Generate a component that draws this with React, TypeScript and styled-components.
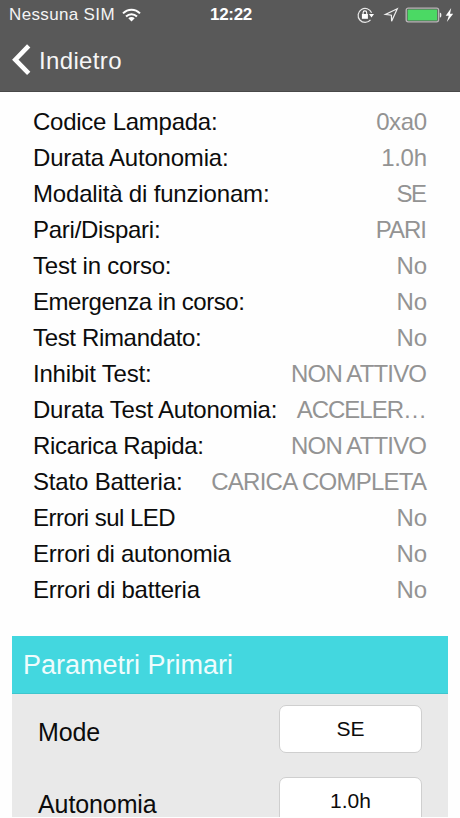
import React from "react";
import styled, { createGlobalStyle } from "styled-components";

const GlobalStyle = createGlobalStyle`
  *, *::before, *::after { box-sizing: border-box; }
  html, body { margin: 0; padding: 0; background: #fff; }
  body { font-family: "Liberation Sans", Arial, sans-serif; overflow: hidden; }
`;

const Screen = styled.div`
  display: flex;
  flex-direction: column;
  width: 460px;
  height: 818px;
  padding-bottom: 1px;
  overflow: hidden;
  background: #fefefe;
`;

const Header = styled.header`
  flex: none;
  height: 92px;
  background: #595959;
  border-bottom: 1px solid #484848;
  color: #fff;
`;

const StatusBar = styled.div`
  display: grid;
  grid-template-columns: 1fr auto 1fr;
  align-items: center;
  height: 29px;
  padding: 0 7px 0 9px;
`;

const Carrier = styled.div`
  display: flex;
  align-items: center;
  gap: 7px;
  font-size: 17px;
  line-height: 29px;
  letter-spacing: 0.35px;
  color: #f4f4f4;
`;

const Clock = styled.time`
  font-size: 17px;
  line-height: 29px;
  font-weight: 700;
  letter-spacing: -0.3px;
`;

const StatusIcons = styled.div`
  display: flex;
  justify-content: flex-end;
`;

const BackButton = styled.button`
  display: flex;
  align-items: center;
  gap: 8px;
  height: 62px;
  margin: 0;
  padding: 0 0 0 11px;
  border: 0;
  background: none;
  color: #fff;
  font: 24px/62px "Liberation Sans", Arial, sans-serif;
`;

const BackLabel = styled.span`
  padding-top: 1px;
  color: #f6f6f6;
  letter-spacing: 0.35px;
`;

const Details = styled.dl`
  flex: none;
  margin: 0;
  padding: 12px 33px 0;
  height: 544px;
`;

const DetailRow = styled.div`
  display: flex;
  justify-content: space-between;
  height: 36px;
  font-size: 24px;
  line-height: 36px;
  white-space: nowrap;
`;

const Term = styled.dt<{ $tracking: number }>`
  color: #0c0c0c;
  letter-spacing: ${(p) => p.$tracking}px;
`;

const Value = styled.dd<{ $tracking: number }>`
  margin: 0 ${(p) => -p.$tracking}px 0 0;
  color: #939393;
  letter-spacing: ${(p) => p.$tracking}px;
`;

const Panel = styled.section`
  flex: 1;
  min-height: 0;
  width: 436px;
  margin-left: 12px;
  overflow: hidden;
  background: #e9e9e9;
`;

const PanelTitle = styled.h2`
  height: 58px;
  margin: 0;
  padding-left: 11px;
  border-bottom: 1px solid #3ec6cd;
  background: #43d7df;
  color: #effcfd;
  font-size: 27px;
  line-height: 58px;
  font-weight: 400;
`;

const Field = styled.div`
  display: flex;
  align-items: flex-start;
  justify-content: space-between;
  height: 72px;
  padding: 11px 26px 0 26px;
`;

const FieldLabel = styled.label`
  color: #0c0c0c;
  font-size: 25px;
  line-height: 54px;
  letter-spacing: -0.1px;
`;

const Picker = styled.button`
  width: 143px;
  height: 48px;
  padding: 0;
  border: 1px solid #cfcfcf;
  border-radius: 7px;
  background: #fff;
  color: #0c0c0c;
  font: 21px/46px "Liberation Sans", Arial, sans-serif;
`;

const details = [
  { term: "Codice Lampada:", value: "0xa0", termTracking: -0.25, valueTracking: -0.4 },
  { term: "Durata Autonomia:", value: "1.0h", termTracking: -0.2, valueTracking: -0.3 },
  { term: "Modalità di funzionam:", value: "SE", termTracking: -0.17, valueTracking: -1.5 },
  { term: "Pari/Dispari:", value: "PARI", termTracking: -0.26, valueTracking: -1 },
  { term: "Test in corso:", value: "No", termTracking: -0.22, valueTracking: -0.2 },
  { term: "Emergenza in corso:", value: "No", termTracking: -0.46, valueTracking: -0.2 },
  { term: "Test Rimandato:", value: "No", termTracking: -0.34, valueTracking: -0.2 },
  { term: "Inhibit Test:", value: "NON ATTIVO", termTracking: -0.2, valueTracking: -0.85 },
  { term: "Durata Test Autonomia:", value: "ACCELER…", termTracking: -0.22, valueTracking: -1 },
  { term: "Ricarica Rapida:", value: "NON ATTIVO", termTracking: -0.34, valueTracking: -0.85 },
  { term: "Stato Batteria:", value: "CARICA COMPLETA", termTracking: -0.18, valueTracking: -0.75 },
  { term: "Errori sul LED", value: "No", termTracking: -0.52, valueTracking: -0.2 },
  { term: "Errori di autonomia", value: "No", termTracking: -0.27, valueTracking: -0.2 },
  { term: "Errori di batteria", value: "No", termTracking: -0.22, valueTracking: -0.2 },
];

const fields = [
  { label: "Mode", value: "SE" },
  { label: "Autonomia", value: "1.0h" },
];

const WifiIcon = () => (
  <svg width="19" height="14" viewBox="0 0 19 14" fill="none" stroke="#fff" strokeWidth="2">
    <path d="M1 5.4C5.8.5 13.2.5 18 5.4" />
    <path d="M4 8.5c3.2-3.1 7.8-3.1 11 0" />
    <path d="M9.5 13.4 6.3 10.2c1.9-1.7 4.5-1.7 6.4 0z" fill="#fff" stroke="none" />
  </svg>
);

const DeviceIcons = () => (
  <svg width="98" height="20" viewBox="0 0 98 20" fill="none">
    <path d="M15.5 14.9A7 7 0 1 1 16.6 7.8" stroke="#e8e8e8" strokeWidth="1.2" />
    <path d="M14 9h5l-2.5 3.4z" fill="#fff" />
    <rect x="6.9" y="9" width="6" height="4.8" fill="#fff" />
    <path d="M8.1 9.4V7.7a1.8 1.8 0 0 1 3.6 0v1.7" stroke="#fff" strokeWidth="1.1" />
    <path d="M42.3 3.7 30.4 9.4l6 .8.2 6z" stroke="#eee" strokeWidth="1.2" />
    <rect x="51.2" y="3.2" width="32.4" height="13.6" rx="2" stroke="#b9b5b7" strokeWidth="1.3" />
    <rect x="52.6" y="4.5" width="29.6" height="11" rx=".5" fill="#4bd964" />
    <path d="M84.8 7.7h.6q1 .3 1 2.4t-1 2.4h-.6z" fill="#eee" />
    <path d="M96.2 3.1 90.7 10.7h3.1l-2 6.4 6.4-8.3h-3.2z" fill="#fff" />
  </svg>
);

const ChevronIcon = () => (
  <svg width="20" height="32" viewBox="0 0 20 32" fill="none" stroke="#fff" strokeWidth="4.6">
    <path d="M17.7 1.9 4.3 15.7 17.7 29.3" />
  </svg>
);

export default function App() {
  return (
    <>
      <GlobalStyle />
      <Screen>
        <Header>
          <StatusBar>
            <Carrier>
              <span>Nessuna SIM</span>
              <WifiIcon />
            </Carrier>
            <Clock>12:22</Clock>
            <StatusIcons>
              <DeviceIcons />
            </StatusIcons>
          </StatusBar>
          <BackButton>
            <ChevronIcon />
            <BackLabel>Indietro</BackLabel>
          </BackButton>
        </Header>
        <Details>
          {details.map((d) => (
            <DetailRow key={d.term}>
              <Term $tracking={d.termTracking}>{d.term}</Term>
              <Value $tracking={d.valueTracking}>{d.value}</Value>
            </DetailRow>
          ))}
        </Details>
        <Panel>
          <PanelTitle>Parametri Primari</PanelTitle>
          {fields.map((f) => (
            <Field key={f.label}>
              <FieldLabel>{f.label}</FieldLabel>
              <Picker>{f.value}</Picker>
            </Field>
          ))}
        </Panel>
      </Screen>
    </>
  );
}
